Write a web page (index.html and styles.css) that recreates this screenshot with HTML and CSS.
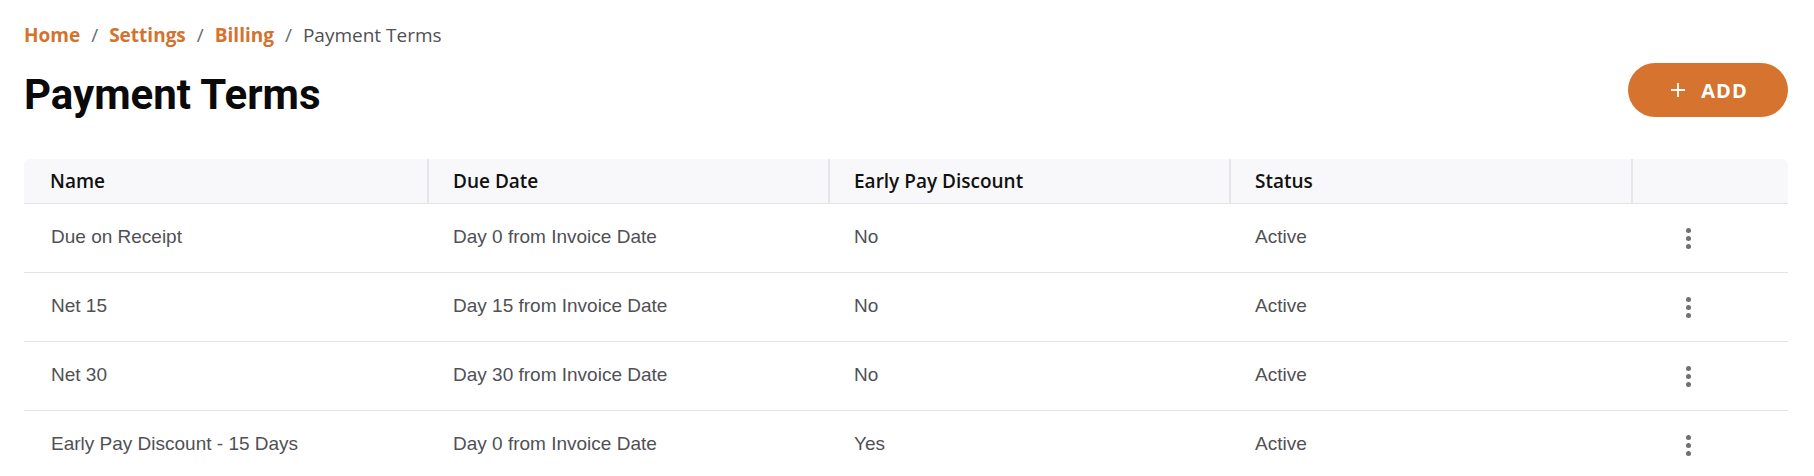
FILE: index.html
```html
<!DOCTYPE html>
<html lang="en">
<head>
<meta charset="utf-8">
<title>Payment Terms</title>
<link rel="stylesheet" href="styles.css">
</head>
<body>
<div class="page">
  <nav class="breadcrumb">
    <a href="#" class="crumb-link">Home</a><span class="sep">/</span>
    <a href="#" class="crumb-link">Settings</a><span class="sep">/</span>
    <a href="#" class="crumb-link">Billing</a><span class="sep">/</span>
    <span class="crumb-current">Payment Terms</span>
  </nav>
  <div class="title-row">
    <h1 class="title">Payment Terms</h1>
    <button class="add-btn" type="button">
      <svg class="plus" width="16" height="16" viewBox="0 0 16 16"><path d="M8 1v14M1 8h14" stroke="#fff" stroke-width="1.8" fill="none"/></svg>
      <span>ADD</span>
    </button>
  </div>
  <div class="table">
    <div class="row head">
      <div class="cell first">Name</div>
      <div class="cell">Due Date</div>
      <div class="cell">Early Pay Discount</div>
      <div class="cell">Status</div>
      <div class="cell"></div>
    </div>
    <div class="row">
      <div class="cell first">Due on Receipt</div>
      <div class="cell">Day 0 from Invoice Date</div>
      <div class="cell">No</div>
      <div class="cell">Active</div>
      <div class="action"><span class="kebab"><i></i><i></i><i></i></span></div>
    </div>
    <div class="row">
      <div class="cell first">Net 15</div>
      <div class="cell">Day 15 from Invoice Date</div>
      <div class="cell">No</div>
      <div class="cell">Active</div>
      <div class="action"><span class="kebab"><i></i><i></i><i></i></span></div>
    </div>
    <div class="row">
      <div class="cell first">Net 30</div>
      <div class="cell">Day 30 from Invoice Date</div>
      <div class="cell">No</div>
      <div class="cell">Active</div>
      <div class="action"><span class="kebab"><i></i><i></i><i></i></span></div>
    </div>
    <div class="row">
      <div class="cell first">Early Pay Discount - 15 Days</div>
      <div class="cell">Day 0 from Invoice Date</div>
      <div class="cell">Yes</div>
      <div class="cell">Active</div>
      <div class="action"><span class="kebab"><i></i><i></i><i></i></span></div>
    </div>
  </div>
</div>
</body>
</html>
```

FILE: styles.css
```css
html, body {
  margin: 0;
  padding: 0;
  background: #fff;
}
.page {
  padding: 22px 26px 0 24px;
}
.breadcrumb {
  font-family: "Open Sans", sans-serif;
  font-size: 19px;
  line-height: 26px;
  display: flex;
  align-items: baseline;
}
.crumb-link {
  color: #d4722e;
  font-weight: 700;
  text-decoration: none;
}
.sep {
  color: #6a6a6a;
  margin: 0 11px;
}
.crumb-current {
  color: #4f4f54;
}
.title-row {
  margin-top: 15px;
  display: flex;
  align-items: center;
  justify-content: space-between;
  height: 54px;
}
.title {
  margin: 0;
  font-family: Roboto, sans-serif;
  font-weight: 700;
  font-size: 42px;
  color: #0a0a0a;
  padding-top: 8px;
}
.add-btn {
  height: 54px;
  width: 160px;
  border: none;
  border-radius: 27px;
  background: #d5732f;
  color: #fff;
  display: flex;
  align-items: center;
  justify-content: center;
  gap: 15px;
  font-family: "Open Sans", sans-serif;
  font-weight: 700;
  font-size: 20px;
  letter-spacing: 1px;
  padding: 0 0 0 2px;
}
.plus {
  display: block;
}
.table {
  margin-top: 42px;
}
.row {
  display: grid;
  grid-template-columns: 403px 401px 401px 402px 1fr;
  height: 69px;
  border-bottom: 1px solid #e3e3e6;
  box-sizing: border-box;
}
.cell {
  display: flex;
  align-items: center;
  padding-left: 26px;
  padding-bottom: 3px;
  font-family: "Liberation Sans", Arial, sans-serif;
  font-size: 19px;
  color: #505055;
}
.cell.first {
  padding-left: 27px;
}
.action {
  display: flex;
  align-items: center;
  padding-left: 55px;
}
.row.head {
  height: 45px;
  background: #f8f8fa;
  border-radius: 6px 6px 0 0;
}
.row.head .cell {
  font-family: "Open Sans", sans-serif;
  font-weight: 600;
  font-size: 19px;
  color: #111;
  padding-left: 24px;
  padding-bottom: 0;
}
.row.head .cell.first {
  padding-left: 26px;
}
.row.head .cell + .cell {
  border-left: 2px solid #e6e6ea;
}
.kebab {
  display: flex;
  flex-direction: column;
  gap: 3px;
}
.kebab i {
  display: block;
  width: 5px;
  height: 5px;
  border-radius: 50%;
  background: #707070;
}
```
